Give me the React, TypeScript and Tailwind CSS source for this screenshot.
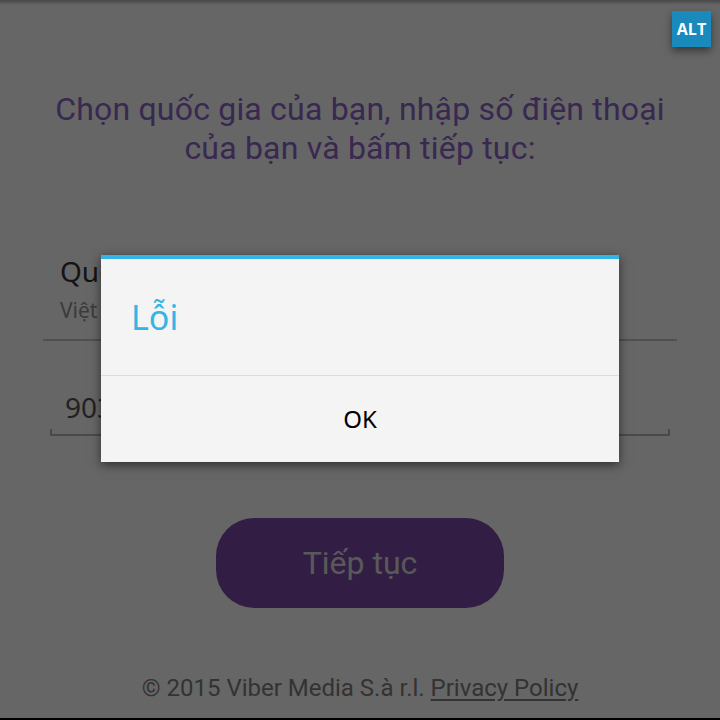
export default function App() {
  return (
    <div className="relative w-[720px] h-[720px] overflow-hidden bg-white font-['Roboto',sans-serif] flex flex-col">
      {/* Registration page (underneath the dialog) */}
      <p className="mt-[90px] text-center text-[32px] leading-[39px] tracking-[0.2px] text-[#8e64c8]">
        Chọn quốc gia của bạn, nhập số điện thoại
        <br />
        của bạn và bấm tiếp tục:
      </p>

      <div className="mt-[86px] pl-[60px] font-['Noto_Sans',sans-serif]">
        <div className="text-[28px] leading-[34px] text-[#333333]">Quốc gia</div>
        <div className="mt-[9px] text-[21px] leading-[26px] text-[#939393]">Việt Nam</div>
      </div>
      <div className="mt-[16px] mx-[43px] h-[2px] bg-[#c8c8c8]" />

      <div className="mt-[49px] pl-[65px] font-['Noto_Sans',sans-serif] text-[28px] leading-[34px] text-[#555555]">
        903
      </div>
      <div className="mt-[5px] ml-[50px] w-[620px] h-[7px] border-l-2 border-r-2 border-b-2 border-[#bababa]" />

      <button className="mt-[82px] mx-auto w-[288px] h-[90px] rounded-[38px] bg-[#7d4daa] text-[32px] text-[#dedede]">
        Tiếp tục
      </button>

      <p className="mt-[66px] text-center text-[24px] leading-[28px] text-[#808080]">
        © 2015 Viber Media S.à r.l. <span className="underline underline-offset-[3px]">Privacy Policy</span>
      </p>
      <div className="flex-1" />
      <div className="h-[2px] bg-black" />

      {/* Dim overlay + dialog */}
      <div className="absolute inset-0 bg-black/60 flex flex-col items-center pt-[255px]">
        <div className="absolute top-0 left-0 right-0 h-[5px] bg-gradient-to-b from-black/30 to-transparent" />
        <div className="w-[518px] bg-[#f4f4f4] border-t-4 border-[#33b5e5] shadow-[0_3px_10px_rgba(0,0,0,0.55)] font-['Noto_Sans',sans-serif]">
          <div className="h-[116px] pt-[38px] pl-[30px] text-[34px] leading-[40px] text-[#33b5e5]">Lỗi</div>
          <div className="h-px bg-[#dcdcdc]" />
          <div className="h-[86px] flex items-center justify-center text-[24px] text-black">OK</div>
        </div>
      </div>

      {/* ALT badge */}
      <div className="absolute top-[11px] right-[9px] w-[39px] h-[36px] bg-[#1a8abc] flex items-center justify-center text-white font-bold text-[16px] font-['Open_Sans',sans-serif] shadow-[0_4px_8px_rgba(0,0,0,0.45)]">
        ALT
      </div>
    </div>
  );
}
